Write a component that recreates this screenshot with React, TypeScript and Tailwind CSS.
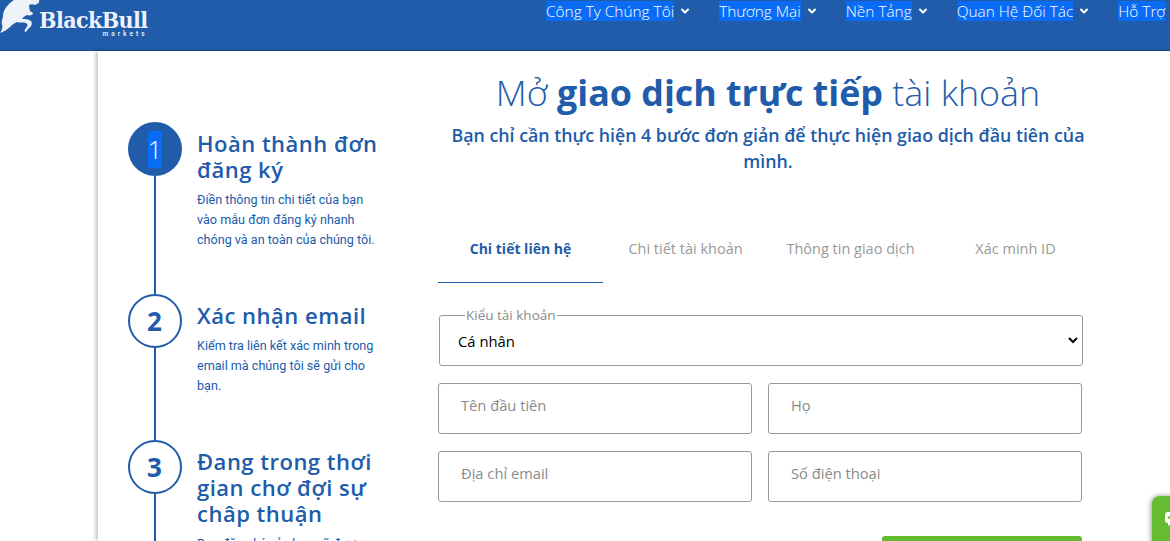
import { ChevronDown } from 'lucide-react';

const navItems = ['Công Ty Chúng Tôi', 'Thương Mại', 'Nền Tảng', 'Quan Hệ Đối Tác'];

const steps = [
  {
    num: '1',
    title: ['Hoàn thành đơn', 'đăng ký'],
    desc: ['Điền thông tin chi tiết của bạn', 'vào mẫu đơn đăng ký nhanh', 'chóng và an toàn của chúng tôi.'],
    height: 'h-[172px]',
    active: true,
  },
  {
    num: '2',
    title: ['Xác nhận email'],
    desc: ['Kiểm tra liên kết xác minh trong', 'email mà chúng tôi sẽ gửi cho', 'bạn.'],
    height: 'h-[146px]',
    active: false,
  },
  {
    num: '3',
    title: ['Đang trong thơi', 'gian chơ đợi sự', 'châp thuận'],
    desc: ['Bạn đăng ký của bạn sẽ được'],
    height: 'h-[180px]',
    active: false,
  },
];

const tabs = ['Chi tiết liên hệ', 'Chi tiết tài khoản', 'Thông tin giao dịch', 'Xác minh ID'];

function Logo() {
  return (
    <div className="flex h-[37px] items-start">
      <svg width="40" height="36" viewBox="0 0 40 36" className="shrink-0">
        <path
          d="M0 33 C2 30 3 27 2 24 C1 21 3 19 3 16 C3 12 5 8 8 5 C10 3 12 1 14 0 L39 0 C40 2 38 4 35 5 C33 4 31 4 29 5 C29 8 30 10 30 11 L33 13 C33 15 30 16 27 15 C25 16 23 17 22 19 C25 19 28 19 31 21 C33 24 31 27 28 29 C27 31 26 32 25 32 C24 31 25 29 26 28 C28 26 28 24 26 23 C23 22 20 23 17 22 C14 23 12 25 10 27 C7 30 3 32 0 33 Z"
          fill="#eef3fa"
        />
      </svg>
      <div className="ml-[-1px] flex flex-col items-end">
        <span className="mt-[8px] font-['DejaVu_Serif_Condensed','DejaVu_Serif',serif] text-[23px] leading-[23px] font-bold tracking-[-0.6px] text-[#eef3fa]">
          BlackBull
        </span>
        <span className="font-['Roboto',sans-serif] text-[6.5px] leading-[7px] font-bold tracking-[3px] text-[#dfe8f4]">
          markets
        </span>
      </div>
    </div>
  );
}

function Step({ num, title, desc, height, active }: (typeof steps)[number]) {
  return (
    <div className={`flex gap-[15px] ${height}`}>
      <div className="flex w-[54px] shrink-0 flex-col items-center">
        <div
          className={`flex size-[54px] shrink-0 items-center justify-center rounded-full border-2 border-[#205caa] ${
            active ? 'bg-[#205caa]' : 'bg-white'
          }`}
        >
          {active ? (
            <span className="bg-[#0a6cf5] font-['Open_Sans',sans-serif] text-[25px] leading-[37px] font-light text-white">
              {num}
            </span>
          ) : (
            <span className="mr-[1px] font-['Open_Sans',sans-serif] text-[26px] leading-[37px] font-bold text-[#205caa]">
              {num}
            </span>
          )}
        </div>
        <div className="w-[2px] flex-1 bg-[#205caa]" />
      </div>
      <div className="w-[190px] pt-[8px]">
        <h3 className="font-['Open_Sans',sans-serif] text-[22px] leading-[26px] font-semibold tracking-[0.5px] whitespace-nowrap text-[#205caa]">
          {title.map((line) => (
            <div key={line}>{line}</div>
          ))}
        </h3>
        <p className="mt-[8px] font-['Roboto',sans-serif] text-[12.6px] leading-[20px] whitespace-nowrap text-[#205caa]">
          {desc.map((line) => (
            <span key={line} className="block">
              {line}
            </span>
          ))}
        </p>
      </div>
    </div>
  );
}

function Field({ placeholder }: { placeholder: string }) {
  return (
    <input
      placeholder={placeholder}
      className="h-[51px] w-[314px] rounded-[3px] border border-[#999] bg-white px-[22px] pb-[8px] font-['Open_Sans',sans-serif] text-[14.7px] outline-none placeholder:text-[#8a8a8a]"
    />
  );
}

export default function App() {
  return (
    <div className="relative h-[541px] w-[1170px] overflow-hidden bg-white">
      {/* Top bar */}
      <header className="flex h-[51px] border-b border-[#174a8c] bg-[#205caa]">
        <div className="w-[546px] shrink-0">
          <Logo />
        </div>
        <nav className="flex items-start gap-[28px] whitespace-nowrap pt-[1px]">
          {navItems.map((item) => (
            <div key={item} className="flex items-center gap-[5px]">
              <span className="bg-[#0a6cf5] pt-[1px] font-['Open_Sans',sans-serif] text-[15.4px] leading-[19px] font-light text-white">
                {item}
              </span>
              <ChevronDown size={12} strokeWidth={4} className="text-white" />
            </div>
          ))}
          <span className="bg-[#0a6cf5] pt-[1px] font-['Open_Sans',sans-serif] text-[15.4px] leading-[19px] font-light text-white">
            Hỗ Trợ
          </span>
        </nav>
      </header>

      {/* Card */}
      <main className="ml-[98px] flex h-[490px] bg-white pl-[30px] shadow-[-2px_0_4px_rgba(0,0,0,0.25)]">
        <div className="w-[310px] shrink-0 pt-[71px]">
          {steps.map((step) => (
            <Step key={step.num} {...step} />
          ))}
        </div>

        <div className="w-[660px] shrink-0 pt-[17px]">
          <h1 className="text-center font-['Open_Sans',sans-serif] text-[35.8px] leading-[48px] font-light whitespace-nowrap text-[#205caa]">
            Mở <span className="font-bold">giao dịch trực tiếp</span> tài khoản
          </h1>
          <p className="mt-[6px] text-center font-['Open_Sans',sans-serif] text-[17.8px] leading-[26px] font-semibold text-[#205caa]">
            Bạn chỉ cần thực hiện 4 bước đơn giản để thực hiện giao dịch đầu tiên của mình.
          </p>

          <div className="mt-[47px] flex">
            {tabs.map((tab, i) => (
              <div
                key={tab}
                className={`h-[62px] w-[165px] pt-[18px] text-center font-['Open_Sans',sans-serif] leading-[20px] ${
                  i === 0
                    ? 'border-b border-[#205caa] text-[14px] font-bold text-[#205caa]'
                    : 'text-[14.5px] text-[#999]'
                }`}
              >
                {tab}
              </div>
            ))}
          </div>

          <fieldset className="mt-[24px] ml-[1px] h-[59px] w-[644px] rounded-[3px] border border-[#999] pl-[25px]">
            <legend className="px-[1px] font-['Open_Sans',sans-serif] text-[13.5px] leading-[16px] text-[#8a8a8a]">
              Kiểu tài khoản
            </legend>
            <select className="ml-[-11px] h-[35px] w-[627px] bg-transparent font-['Open_Sans',sans-serif] text-[14.8px] text-black outline-none">
              <option>Cá nhân</option>
            </select>
          </fieldset>

          <div className="mt-[17px] grid w-[644px] grid-cols-[314px_314px] gap-x-[16px] gap-y-[17px]">
            <Field placeholder="Tên đầu tiên" />
            <Field placeholder="Họ" />
            <Field placeholder="Địa chỉ email" />
            <Field placeholder="Số điện thoại" />
          </div>

          <div className="mt-[34px] flex w-[644px] justify-end">
            <div className="h-[40px] w-[200px] rounded-[3px] bg-[#65bc2e]" />
          </div>
        </div>
      </main>

      {/* Chat widget */}
      <div className="absolute top-[496px] left-[1152px] h-[60px] w-[40px] rounded-tl-[8px] bg-[#65bc2e] pt-[16px] pl-[13px] shadow-[-1px_0_5px_rgba(0,0,0,0.4)]">
        <svg width="18" height="14" viewBox="0 0 18 14">
          <path d="M3 0 H15 A3 3 0 0 1 18 3 V8 A3 3 0 0 1 15 11 H7 L3 14 V11 A3 3 0 0 1 0 8 V3 A3 3 0 0 1 3 0 Z" fill="white" />
          <circle cx="4" cy="5.5" r="1.3" fill="#65bc2e" />
        </svg>
      </div>
    </div>
  );
}
